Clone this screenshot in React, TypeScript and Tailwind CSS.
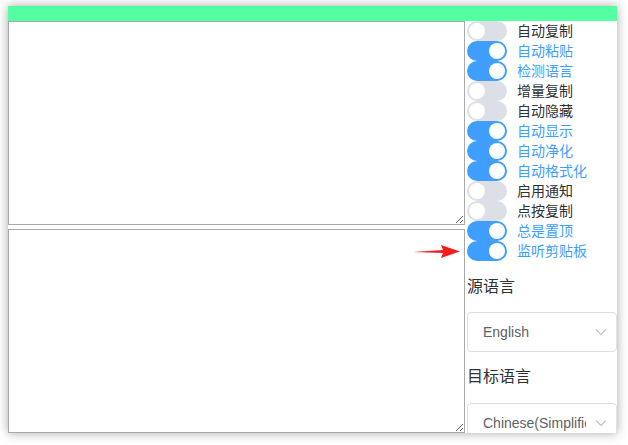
import React from "react";

const rows: [string, boolean][] = [
  ["自动复制", false],
  ["自动粘贴", true],
  ["检测语言", true],
  ["增量复制", false],
  ["自动隐藏", false],
  ["自动显示", true],
  ["自动净化", true],
  ["自动格式化", true],
  ["启用通知", false],
  ["点按复制", false],
  ["总是置顶", true],
  ["监听剪贴板", true],
];

const cjk = { fontFamily: '"Liberation Sans", "Noto Sans CJK SC", sans-serif' };

function Switch({ on }: { on: boolean }) {
  return (
    <div
      className={
        "relative w-[40px] h-[20px] rounded-full shrink-0 " +
        (on ? "bg-[#409eff]" : "bg-[#dcdfe6]")
      }
    >
      <div
        className={
          "absolute top-[2px] w-[16px] h-[16px] rounded-full bg-white " +
          (on ? "left-[22px]" : "left-[2px]")
        }
      />
    </div>
  );
}

function Select({ value }: { value: string }) {
  return (
    <div className="relative h-[40px] w-[150px] border border-[#dcdfe6] rounded-[4px] bg-white flex items-center">
      <div className="ml-[15px] w-[103px] overflow-hidden whitespace-nowrap text-[14px] text-[#606266]" style={{ fontFamily: '"Liberation Sans", Arial, sans-serif' }}>
        {value}
      </div>
      <svg className="absolute right-[9px] top-[15px]" width="12" height="8" viewBox="0 0 12 8">
        <path d="M1 1.5 L6 6.5 L11 1.5" fill="none" stroke="#c0c4cc" strokeWidth="1.2" />
      </svg>
    </div>
  );
}

export default function App() {
  return (
    <div className="w-[628px] h-[445px] bg-white relative overflow-hidden" style={cjk}>
      <div className="ml-[8px] mt-[6px] w-[609px] h-[427px] bg-white shadow-[0_0_10px_rgba(0,0,0,0.35)] overflow-hidden flex flex-col">
        <div className="h-[15px] bg-[#53ffa1] shrink-0" />
        <div className="flex flex-1 min-h-0">
          <div className="w-[457px] flex flex-col gap-[4px] shrink-0">
            <textarea className="block w-[457px] h-[204px] border border-[#a9a9a9] bg-white outline-none resize" />
            <textarea className="block w-[457px] h-[204px] border border-[#a9a9a9] bg-white outline-none resize" />
          </div>
          <div className="flex-1 pl-[2px] flex flex-col">
            {rows.map(([label, on]) => (
              <div key={label} className="h-[20px] flex items-center">
                <Switch on={on} />
                <span
                  className={
                    "ml-[10px] text-[14px] leading-[20px] " +
                    (on ? "text-[#409eff]" : "text-[#303133]")
                  }
                >
                  {label}
                </span>
              </div>
            ))}
            <div className="mt-[14px] text-[16px] leading-[24px] text-[#303133]">源语言</div>
            <div className="mt-[13px]">
              <Select value="English" />
            </div>
            <div className="mt-[13px] text-[16px] leading-[24px] text-[#303133]">目标语言</div>
            <div className="mt-[14px]">
              <Select value="Chinese(Simplified)" />
            </div>
          </div>
        </div>
      </div>
      <svg className="absolute left-[413px] top-[242px]" width="48" height="18" viewBox="0 0 48 18">
        <polygon points="0,10 30,8 28,3 47,9.5 28,16 30,11" fill="#f41d1d" />
      </svg>
    </div>
  );
}
